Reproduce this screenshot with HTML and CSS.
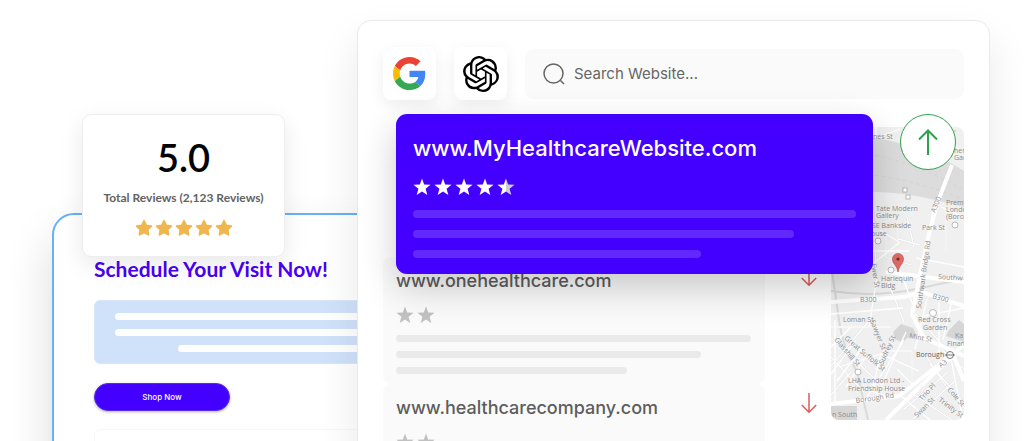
FILE: index.html
```html
<!DOCTYPE html>
<html lang="en">
<head>
<meta charset="utf-8">
<meta name="viewport" content="width=device-width, initial-scale=1">
<title>Healthcare website ranking</title>
<link rel="stylesheet" href="styles.css">
</head>
<body>
<svg class="defs" aria-hidden="true">
  <defs>
    <linearGradient id="half"><stop offset="50%" stop-color="#fff"/><stop offset="50%" stop-color="#cbcbd6"/></linearGradient>
    <symbol id="star" viewBox="0 0 20 20"><path d="M10 .5l2.400 6.700 7.100.3-5.500 4.500 1.900 7L10 15.100l-5.900 3.900 1.900-7L.5 7.500l7.100-.3z"/></symbol>
    <symbol id="round-star" viewBox="0 0 20 20"><path stroke-width="2" stroke-linejoin="round" d="M10 2l2.500 5.100 5.600.8-4 4 .9 5.600-5-2.600-5 2.600.9-5.600-4-4 5.600-.8z"/></symbol>
    <symbol id="arrow" viewBox="0 0 16 20"><path fill="none" stroke-width="1.500" d="M8 0v19M.8 12L8 19.200 15.200 12"/></symbol>
  </defs>
</svg>
<main class="scene">
  <section class="preview">
    <h2 class="preview-title">Schedule Your Visit Now!</h2>
    <div class="preview-copy"><span class="line"></span><span class="line"></span><span class="line line-indent"></span></div>
    <button class="shop" type="button">Shop Now</button>
    <div class="preview-next"></div>
    <aside class="rating">
      <strong class="score">5.0</strong>
      <span class="total">Total Reviews (2,123 Reviews)</span>
      <div class="gold-stars" role="img" aria-label="5 stars">
        <svg><use href="#round-star"/></svg><svg><use href="#round-star"/></svg><svg><use href="#round-star"/></svg><svg><use href="#round-star"/></svg><svg><use href="#round-star"/></svg>
      </div>
    </aside>
  </section>

  <section class="window">
    <header class="toolbar">
      <button class="engine" type="button" aria-label="Google">
        <svg class="google" viewBox="0 0 48 48"><path fill="#EA4335" d="M24 9.500c3.540 0 6.710 1.220 9.210 3.600l6.850-6.850C35.900 2.380 30.470 0 24 0 14.620 0 6.510 5.380 2.560 13.220l7.980 6.190C12.430 13.720 17.740 9.500 24 9.500z"/><path fill="#4285F4" d="M46.980 24.550c0-1.570-.15-3.090-.38-4.550H24v9.020h12.940c-.58 2.960-2.260 5.480-4.780 7.180l7.730 6c4.510-4.180 7.090-10.360 7.090-17.650z"/><path fill="#FBBC05" d="M10.530 28.590c-.48-1.450-.76-2.990-.76-4.590s.27-3.140.76-4.590l-7.980-6.190C.92 16.460 0 20.120 0 24s.92 7.540 2.560 10.780l7.970-6.190z"/><path fill="#34A853" d="M24 48c6.480 0 11.930-2.130 15.890-5.810l-7.730-6c-2.150 1.450-4.920 2.300-8.160 2.300-6.260 0-11.570-4.220-13.470-9.910l-7.980 6.190C6.510 42.620 14.620 48 24 48z"/></svg>
      </button>
      <button class="engine" type="button" aria-label="ChatGPT">
        <svg class="gpt" viewBox="0 0 24 24"><path d="M22.2819 9.8211a5.9847 5.9847 0 0 0-.5157-4.9108 6.0462 6.0462 0 0 0-6.5098-2.9A6.0651 6.0651 0 0 0 4.9807 4.1818a5.9847 5.9847 0 0 0-3.9977 2.9 6.0462 6.0462 0 0 0 .7427 7.0966 5.98 5.98 0 0 0 .511 4.9107 6.051 6.051 0 0 0 6.5146 2.9001A5.9847 5.9847 0 0 0 13.2599 24a6.0557 6.0557 0 0 0 5.7718-4.2058 5.9894 5.9894 0 0 0 3.9977-2.9001 6.0557 6.0557 0 0 0-.7475-7.0729zm-9.022 12.6081a4.4755 4.4755 0 0 1-2.8764-1.0408l.1419-.0804 4.7783-2.7582a.7948.7948 0 0 0 .3927-.6813v-6.7369l2.02 1.1686a.071.071 0 0 1 .038.052v5.5826a4.504 4.504 0 0 1-4.4945 4.4944zm-9.6607-4.1254a4.4708 4.4708 0 0 1-.5346-3.0137l.142.0852 4.783 2.7582a.7712.7712 0 0 0 .7806 0l5.8428-3.3685v2.3324a.0804.0804 0 0 1-.0332.0615L9.74 19.9502a4.4992 4.4992 0 0 1-6.1408-1.6464zM2.3408 7.8956a4.485 4.485 0 0 1 2.3655-1.9728V11.6a.7664.7664 0 0 0 .3879.6765l5.8144 3.3543-2.0201 1.1685a.0757.0757 0 0 1-.071 0l-4.8303-2.7865A4.504 4.504 0 0 1 2.3408 7.872zm16.5963 3.8558L13.1038 8.364 15.1192 7.2a.0757.0757 0 0 1 .071 0l4.8303 2.7913a4.4944 4.4944 0 0 1-.6765 8.1042v-5.6772a.79.79 0 0 0-.407-.667zm2.0107-3.0231l-.142-.0852-4.7735-2.7818a.7759.7759 0 0 0-.7854 0L9.409 9.2297V6.8974a.0662.0662 0 0 1 .0284-.0615l4.8303-2.7866a4.4992 4.4992 0 0 1 6.6802 4.66zM8.3065 12.863l-2.02-1.1638a.0804.0804 0 0 1-.038-.0567V6.0742a4.4992 4.4992 0 0 1 7.3757-3.4537l-.142.0805L8.704 5.459a.7948.7948 0 0 0-.3927.6813zm1.0976-2.3654l2.602-1.4998 2.6069 1.4998v2.9994l-2.5974 1.4997-2.6067-1.4997Z"/></svg>
      </button>
      <label class="search">
        <svg class="lens" viewBox="0 0 22 22"><circle cx="10.500" cy="10.500" r="9.500"/><path d="M17.500 17.500l3.500 3.500"/></svg>
        <input class="search-input" type="text" aria-label="Search website" placeholder="Search Website...">
      </label>
    </header>

    <div class="content">
      <div class="results">
        <div class="row">
          <article class="result">
            <a class="result-url" href="#">www.onehealthcare.com</a>
            <div class="stars"><svg><use href="#star"/></svg><svg><use href="#star"/></svg></div>
            <div class="bars"><span class="bar"></span><span class="bar bar-mid"></span><span class="bar bar-short"></span></div>
          </article>
          <svg class="down"><use href="#arrow"/></svg>
        </div>
        <div class="row">
          <article class="result">
            <a class="result-url" href="#">www.healthcarecompany.com</a>
            <div class="stars"><svg><use href="#star"/></svg><svg><use href="#star"/></svg></div>
            <div class="bars"><span class="bar"></span><span class="bar bar-mid"></span><span class="bar bar-short"></span></div>
          </article>
          <svg class="down"><use href="#arrow"/></svg>
        </div>
      </div>

      <div class="map">
        <svg class="map-art" viewBox="0 0 133 293" role="img" aria-label="Map of Southwark">
          <rect width="133" height="293" fill="#f0f0f0"/>
          <path fill="#dcdcdc" d="M0 7C45 8 94 18 133 44V80C93 70 72 65 40 65L0 61z"/>
          <path fill="#d6d6d6" d="M62 205l8-8 12 4 4 8-10 2-4 5-8-4zM118 203l10-10 5 4v18l-18-6zM0 279h26v14H0z"/>
          <g fill="none" stroke="#dadada" stroke-width="2"><path d="M0 164q45 7 90-3t43-7M1 145l7 48q3 25 18 52l11 48M105 4h20"/></g>
          <g fill="none" stroke="#d0d0d0" stroke-width=".7" stroke-dasharray="4 3"><path d="M2 24q61 0 129 38M2 47q61-3 129 25"/></g>
          <g fill="none" stroke="#dedede" stroke-width="2">
            <path d="M41 65l4 78M55 94v36l25 8M67 86v26l22 6M76 90l7 30M115 81v42M57 155l16 40M0 200h60M0 211l56 52M0 230l33 35M14 210l33 28M59 224h22v34M84 186l43 51M110 222l23 20M93 226l31 47M79 265l42 28M99 237l33 38M72 283l45-38M82 292l43-39M0 239l37-44M0 268l20-23"/>
          </g>
          <g fill="none" stroke="#fff" stroke-width="1.300">
            <path d="M45 11V0M45 11L69 2M0 10h45M100 5l33 20M41 65l4 78M55 94v36l25 8M67 86v26l22 6M76 90l7 30M102 83l-7 46M115 81v42M110 80l23 10M85 131l48 9M42 124h36M57 155l16 40M69 143l15 41M0 200h60M46 150l-8 50M0 187l72-6M0 211l56 52M0 230l33 35M14 210l33 28M8 240l42-13 38 17M36 270l37-57M50 260l25-55M66 242l17 17M59 224h22v34M84 186l43 51M96 172l-12 50M93 189l40-8M108 175v50M121 173l-9 40M110 222l23 20M93 226l31 47M79 265l42 28M99 237l33 38M72 283l45-38M82 292l43-39M99 293l-29-24M120 232l12 61M0 220l20-20M0 239l37-44M0 268l20-23M32 261l28 10"/>
            <path d="M4 193v82M25 213L0 247M31 221L6 254M37 227L15 260M69 115l-26 21M68 115l-19-12M50 226l-9 38"/>
          </g>
          <g fill="none" stroke="#fff" stroke-width="4" stroke-linejoin="round">
            <path d="M121 38L106 77 96 115 86 163 81 187 93 211 133 229M0 175l73-5 17-5 43 14M0 277l68-8 65-51M120 222l13 32M55 145l78 10M55 293l70-68"/>
          </g>
          <g class="map-text">
            <text x="42" y="12">nes St</text><text x="123" y="26">hem</text><text x="123" y="33">Gar</text>
            <text x="45" y="84">Tate Modern</text><text x="45" y="91">Gallery</text><text x="41" y="101">SE Bankside</text><text x="40" y="109">ouse</text>
            <text x="115" y="78">Premi</text><text x="115" y="85">Londo</text><text x="115" y="92">(Boro</text><text x="91" y="103">Park St</text>
            <text x="50" y="154">Harlequin</text><text x="50" y="161">Bldg</text><text x="107" y="152" transform="rotate(4 107 152)">Southw</text>
            <text x="29" y="175">B300</text><text x="101" y="171" transform="rotate(16 101 171)">B300</text>
            <text x="12" y="195">Loman St</text><text x="87" y="195">Red Cross</text><text x="92" y="203">Garden</text><text x="78" y="211" transform="rotate(10 78 211)">Mint St</text>
            <text x="124" y="211">Ka</text><text x="116" y="219">Finan</text><text x="85" y="230" class="strong">Borough</text>
            <text x="17" y="256">LHA London Ltd -</text><text x="17" y="264">Friendship House</text>
            <text x="25" y="276" transform="rotate(-8 25 276)">Borough Rd</text><text x="1" y="290">n South</text>
            <text transform="translate(104 86) rotate(-67)">A300</text><text transform="translate(90 182) rotate(-82)">Southwark Bridge Rd</text>
            <text transform="translate(13 212) rotate(40)">Great Suffolk St</text><text transform="translate(3 213) rotate(49)">Glasshill St</text>
            <text transform="translate(52 238) rotate(-66)">Sudrey St</text><text transform="translate(39 194) rotate(68)">Sawyer St</text><text transform="translate(40 137) rotate(80)">Ewer St</text>
            <text transform="translate(110 241) rotate(-38)">A3</text><text transform="translate(91 274) rotate(-47)">Trio Pl</text><text transform="translate(86 291) rotate(-45)">Swan St</text>
            <text transform="translate(107 274) rotate(36)">Trinity St</text><text transform="translate(116 263) rotate(49)">Cole St</text>
          </g>
          <g fill="#fff" stroke="#aaa" stroke-width=".8"><rect x="72" y="61" width="4" height="4"/><rect x="75" y="68" width="4" height="4"/><circle cx="47" cy="114" r="3"/><circle cx="124" cy="98" r="3"/><circle cx="60" cy="143" r="3"/><circle cx="102" cy="186" r="3.500"/><circle cx="27" cy="245" r="3"/></g>
          <g fill="#fff" stroke="#777"><circle cx="119" cy="228" r="3.500"/><path d="M114 228h10"/></g>
          <path fill="#dd6b66" stroke="#bf5652" stroke-width=".7" d="M67 145c-1-7-5.500-8-5.500-13a5.500 5.500 0 0 1 11 0c0 5-4.500 6-5.500 13z"/><circle cx="67" cy="132" r="1.600" fill="#702826"/>
        </svg>
        <span class="up"><svg viewBox="0 0 20 26"><path d="M10 26V1.500M1 10.500l9-9 9 9"/></svg></span>
      </div>

      <article class="featured">
        <a class="featured-url" href="#">www.MyHealthcareWebsite.com</a>
        <div class="stars"><svg><use href="#star"/></svg><svg><use href="#star"/></svg><svg><use href="#star"/></svg><svg><use href="#star"/></svg><svg class="half"><use href="#star"/></svg></div>
        <div class="bars"><span class="bar"></span><span class="bar bar-mid"></span><span class="bar bar-short"></span></div>
      </article>
    </div>
  </section>
</main>
</body>
</html>
```
FILE: styles.css
```css
* { box-sizing: border-box; }
body { margin: 0; background: #fff; font-family: "Liberation Sans", sans-serif; }
button, input { font: inherit; }
a { color: inherit; text-decoration: none; }
svg { display: block; }
.defs { position: absolute; width: 0; height: 0; }

.scene {
  display: grid;
  grid-template-columns: 305px minmax(0, 1fr);
  align-items: start;
  height: 100vh;
  padding: 20px 34px 0 52px;
  overflow: hidden;
}

/* Landing page preview */
.preview {
  position: relative;
  display: flex;
  flex-direction: column;
  align-items: flex-start;
  margin: 193px -24px 0 0;
  padding: 39px 0 40px 40px;
  border: 2px solid #65b1fa;
  border-radius: 22px;
  background: #fff;
  box-shadow: 0 24px 48px rgba(0, 0, 0, .14);
}
.preview-title {
  margin: 0;
  color: #4a00f5;
  font: 700 21px/30px Lato, sans-serif;
}
.preview-copy {
  display: flex;
  flex-direction: column;
  gap: 9px;
  width: 100%;
  margin-top: 16px;
  padding: 12px 0 11px 20px;
  border: 1px solid #d9e6fa;
  border-radius: 6px;
  background: #d0e1fa;
}
.line { height: 7px; border-radius: 4px; background: #fff; }
.line-indent { margin-left: 63px; }
.shop {
  width: 136px;
  height: 28px;
  margin-top: 19px;
  padding: 0;
  border: 1px solid #5a2be0;
  border-radius: 14px;
  background: #4400ff;
  box-shadow: 0 1px 3px rgba(0, 0, 0, .3);
  color: #fff;
  font: 500 8px/12px Inter, sans-serif;
}
.preview-next {
  width: 100%;
  height: 60px;
  margin-top: 18px;
  border: 1px solid #f7f7f7;
  border-radius: 6px;
}
.rating {
  position: absolute;
  top: -101px;
  left: 28px;
  display: flex;
  flex-direction: column;
  align-items: center;
  width: 203px;
  padding: 18px 0 19px;
  border: 1px solid #eee;
  border-radius: 9px;
  background: #fff;
  box-shadow: 0 8px 24px rgba(0, 0, 0, .09);
  font-family: Lato, sans-serif;
}
.score { color: #000; font-size: 38px; font-weight: 600; line-height: 48px; }
.total { margin-top: 8px; color: #626262; font-size: 12px; font-weight: 700; line-height: 18px; white-space: nowrap; }
.gold-stars { display: flex; gap: 2px; margin-top: 12px; }
.gold-stars svg { width: 18px; height: 18px; fill: #efb64f; stroke: #efb64f; }

/* Search window */
.window {
  position: relative;
  padding: 26px 25px 40px;
  border: 1px solid #e9e9e9;
  border-radius: 14px;
  background: #fff;
  box-shadow: 0 20px 44px rgba(0, 0, 0, .09);
}
.toolbar { display: flex; align-items: center; gap: 18px; }
.engine {
  display: grid;
  place-items: center;
  flex: none;
  width: 53px;
  height: 53px;
  padding: 0;
  border: 0;
  border-radius: 8px;
  background: #fff;
  box-shadow: 0 5px 16px rgba(0, 0, 0, .07);
}
.google { width: 33px; height: 33px; }
.gpt { width: 36px; height: 36px; }
.search {
  display: flex;
  flex: 1;
  align-items: center;
  gap: 9px;
  height: 50px;
  padding: 0 18px;
  border-radius: 9px;
  background: #fafafa;
}
.lens { width: 22px; height: 22px; fill: none; stroke: #666; stroke-width: 1.5; }
.search-input {
  flex: 1;
  min-width: 0;
  padding: 0;
  border: 0;
  outline: 0;
  background: none;
  color: #666;
  font: 400 15px/22px Inter, sans-serif;
}
.search-input::placeholder { color: #666; opacity: 1; }

.content {
  position: relative;
  display: grid;
  grid-template-columns: minmax(0, 1fr) 133px;
  align-items: start;
  margin-top: 27px;
}
.results { padding-top: 130px; }
.row { display: grid; grid-template-columns: minmax(0, 1fr) 66px; align-items: start; }
.result { padding: 11px 14px 10px 13px; border-radius: 8px; background: #fafafa; }
.result-url { display: block; color: #5d5d5d; font: 500 18px/26px Inter, sans-serif; }
.stars { display: flex; gap: 3px; }
.stars svg { width: 18px; height: 18px; fill: #c1c1c1; }
.result .stars { margin: 12px 0 11px; }
.bars { display: flex; flex-direction: column; gap: 9px; }
.bar { height: 7px; border-radius: 4px; background: #eaeaea; }
.bar-mid { width: 86%; }
.bar-short { width: 65%; }
.down { width: 16px; height: 20px; margin: 9px 0 0 36px; stroke: #e05a5a; }

.map { position: relative; }
.map-art { width: 100%; border-radius: 8px; }
.map-text { fill: #8c8c8c; font: 7px "Open Sans", sans-serif; }
.strong { fill: #5f5f5f; }
.up {
  position: absolute;
  top: -13px;
  right: 8px;
  z-index: 2;
  display: grid;
  place-items: center;
  width: 56px;
  height: 56px;
  border: 1px solid #2ba14d;
  border-radius: 50%;
  background: #fff;
}
.up svg { width: 20px; height: 26px; fill: none; stroke: #2ba14d; stroke-width: 2; }

.featured {
  position: absolute;
  top: -13px;
  right: 91px;
  left: 13px;
  padding: 19px 17px 16px;
  border-radius: 11px;
  background: #4400ff;
  box-shadow: 0 14px 36px rgba(0, 0, 0, .2);
}
.featured-url { display: block; color: #fff; font: 500 22px/30px Inter, sans-serif; }
.featured .stars { margin: 15px 0 14px; }
.featured .stars svg { fill: #fff; }
.featured .stars .half { fill: url(#half); }
.featured .bars { gap: 12px; }
.featured .bar { height: 8px; background: #6229ff; }
```
